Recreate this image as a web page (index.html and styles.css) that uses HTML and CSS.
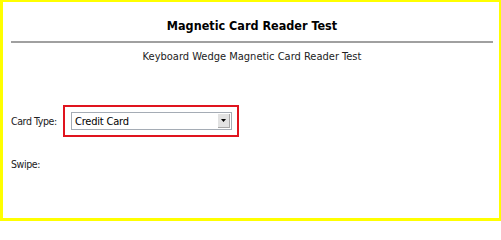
FILE: index.html
```html
<!DOCTYPE html>
<html>
<head>
<meta charset="utf-8">
<link rel="stylesheet" href="styles.css">
</head>
<body>
<div class="frame">
  <h1 class="title">Magnetic Card Reader Test</h1>
  <div class="rule"></div>
  <p class="subtitle">Keyboard Wedge Magnetic Card Reader Test</p>
  <div class="row">
    <span class="label">Card Type:</span>
    <div class="highlight">
      <div class="select">
        <span class="value">Credit Card</span>
        <span class="btn"><svg width="5" height="3" viewBox="0 0 5 3"><path d="M0 0h5L2.5 3z" fill="#000"/></svg></span>
      </div>
    </div>
  </div>
  <div class="swipe">Swipe:</div>
</div>
</body>
</html>
```
FILE: styles.css
```css
html, body { margin: 0; padding: 0; background: #fff; }
.frame {
  box-sizing: border-box;
  width: 501px;
  height: 221px;
  border-style: solid;
  border-color: #ffff00;
  border-width: 2px 2px 3px 3px;
  padding: 0 6px 0 8px;
  font-family: "DejaVu Sans Condensed", "DejaVu Sans", sans-serif;
  font-stretch: condensed;
  color: #000;
}
.title {
  margin: 0;
  padding-top: 16px;
  height: 23px;
  font-size: 12.5px;
  font-weight: bold;
  text-align: center;
  line-height: 16px;
}
.rule {
  height: 0;
  border-top: 2px solid #a0a0a0;
}
.subtitle {
  margin: 0;
  padding-top: 7px;
  font-size: 11px;
  line-height: 14px;
  text-align: center;
  color: #222;
}
.row {
  display: flex;
  align-items: center;
  margin-top: 41px;
}
.label {
  font-size: 10.5px;
  letter-spacing: -0.4px;
  color: #222;
  width: 52px;
  white-space: nowrap;
}
.highlight {
  border: 2px solid #e0141e;
  padding: 5px 5px 5px 6px;
}
.select {
  box-sizing: border-box;
  width: 161px;
  height: 18px;
  border: 1px solid #a5acb5;
  display: flex;
  align-items: center;
  background: #fff;
}
.value {
  flex: 1;
  font-size: 11px;
  letter-spacing: -0.2px;
  padding-left: 3px;
  color: #000;
}
.btn {
  box-sizing: border-box;
  width: 12px;
  height: 14px;
  margin-right: 1px;
  background: #e2e2e2;
  border-right: 1px solid #a8a8a8;
  border-bottom: 1px solid #a8a8a8;
  display: flex;
  align-items: center;
  justify-content: center;
}
.swipe {
  margin-top: 21px;
  font-size: 10.5px;
  letter-spacing: -0.4px;
  color: #222;
}
```
